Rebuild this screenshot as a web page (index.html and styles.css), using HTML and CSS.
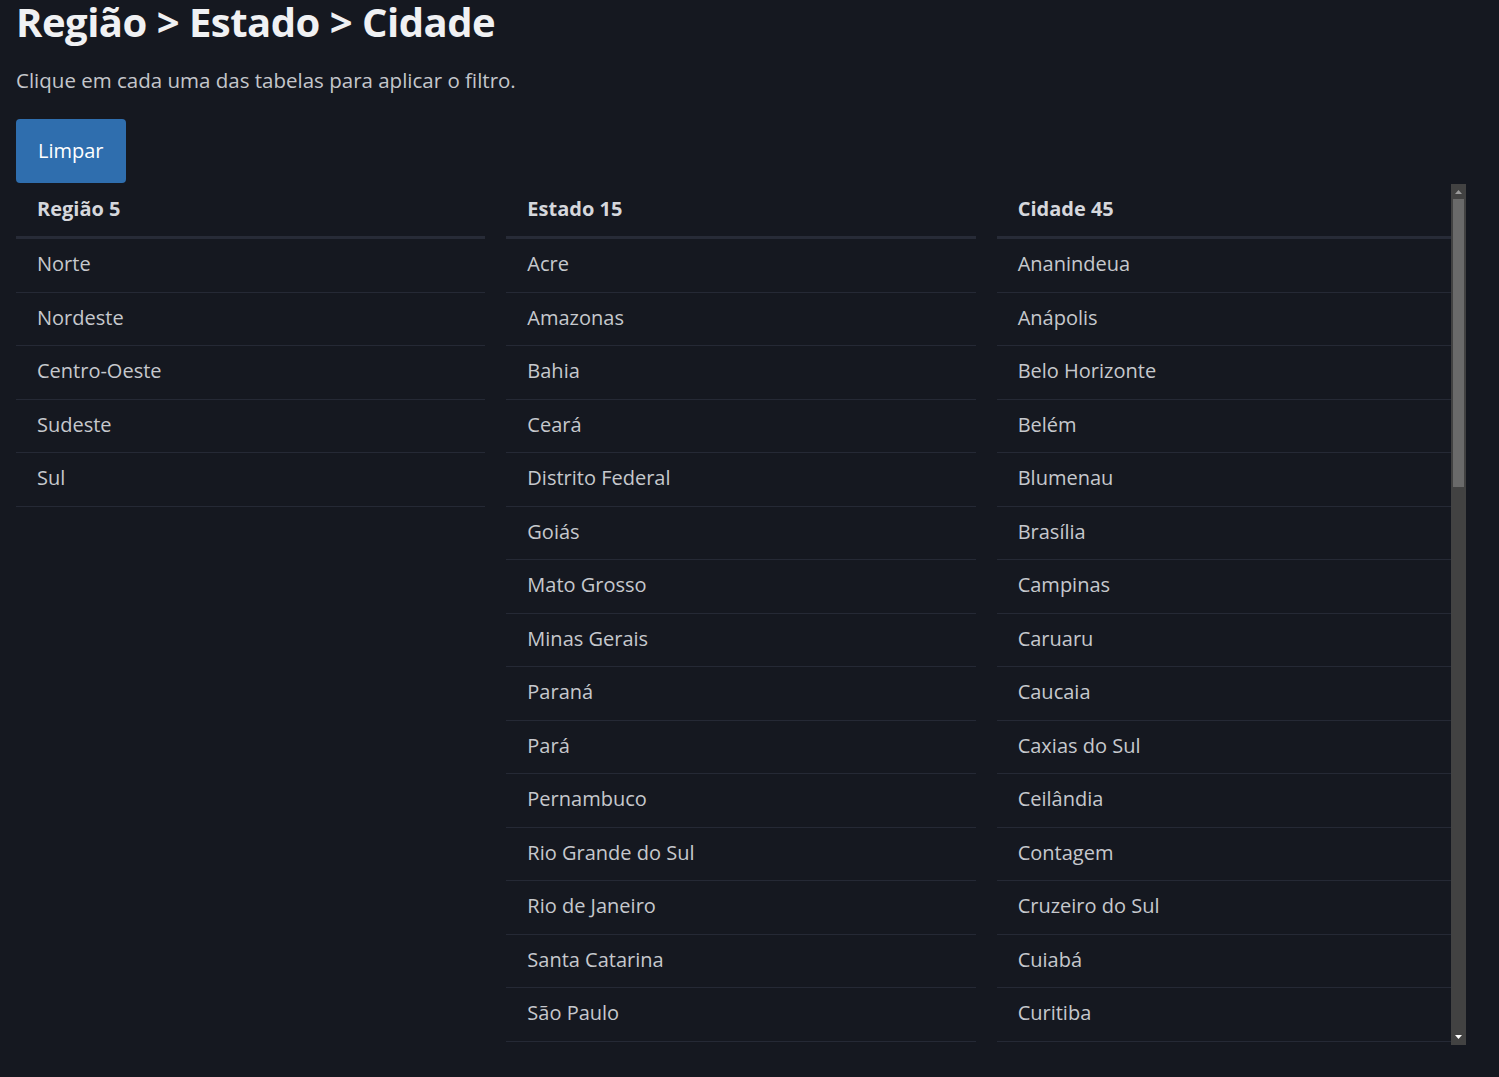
FILE: index.html
```html
<!DOCTYPE html>
<html lang="pt-BR">
<head>
<meta charset="utf-8">
<title>Região &gt; Estado &gt; Cidade</title>
<link rel="stylesheet" href="styles.css">
</head>
<body>
<main class="page">
  <h1 class="title">Região &gt; Estado &gt; Cidade</h1>
  <p class="subtitle">Clique em cada uma das tabelas para aplicar o filtro.</p>
  <button class="btn" type="button">Limpar</button>
  <section class="tables">
    <div class="col">
      <table class="tbl">
        <thead><tr><th>Região 5</th></tr></thead>
        <tbody>
          <tr><td>Norte</td></tr>
          <tr><td>Nordeste</td></tr>
          <tr><td>Centro-Oeste</td></tr>
          <tr><td>Sudeste</td></tr>
          <tr><td>Sul</td></tr>
        </tbody>
      </table>
    </div>
    <div class="col">
      <table class="tbl">
        <thead><tr><th>Estado 15</th></tr></thead>
        <tbody>
          <tr><td>Acre</td></tr>
          <tr><td>Amazonas</td></tr>
          <tr><td>Bahia</td></tr>
          <tr><td>Ceará</td></tr>
          <tr><td>Distrito Federal</td></tr>
          <tr><td>Goiás</td></tr>
          <tr><td>Mato Grosso</td></tr>
          <tr><td>Minas Gerais</td></tr>
          <tr><td>Paraná</td></tr>
          <tr><td>Pará</td></tr>
          <tr><td>Pernambuco</td></tr>
          <tr><td>Rio Grande do Sul</td></tr>
          <tr><td>Rio de Janeiro</td></tr>
          <tr><td>Santa Catarina</td></tr>
          <tr><td>São Paulo</td></tr>
        </tbody>
      </table>
    </div>
    <div class="col col-scroll">
      <div class="clip">
        <table class="tbl">
          <thead><tr><th>Cidade 45</th></tr></thead>
          <tbody>
            <tr><td>Ananindeua</td></tr>
            <tr><td>Anápolis</td></tr>
            <tr><td>Belo Horizonte</td></tr>
            <tr><td>Belém</td></tr>
            <tr><td>Blumenau</td></tr>
            <tr><td>Brasília</td></tr>
            <tr><td>Campinas</td></tr>
            <tr><td>Caruaru</td></tr>
            <tr><td>Caucaia</td></tr>
            <tr><td>Caxias do Sul</td></tr>
            <tr><td>Ceilândia</td></tr>
            <tr><td>Contagem</td></tr>
            <tr><td>Cruzeiro do Sul</td></tr>
            <tr><td>Cuiabá</td></tr>
            <tr><td>Curitiba</td></tr>
          </tbody>
        </table>
      </div>
      <div class="scrollbar" aria-hidden="true">
        <div class="sb-btn">
          <svg width="15" height="15" viewBox="0 0 15 15"><polygon points="4,10 7.5,6 11,10" fill="#9a9a9a"/></svg>
        </div>
        <div class="sb-track"><div class="sb-thumb"></div></div>
        <div class="sb-btn">
          <svg width="15" height="15" viewBox="0 0 15 15"><polygon points="4,5 11,5 7.5,9" fill="#ffffff"/></svg>
        </div>
      </div>
    </div>
  </section>
</main>
</body>
</html>
```

FILE: styles.css
```css
html, body {
  margin: 0;
  padding: 0;
  background: #151820;
}

body {
  font-family: "Open Sans", "Noto Sans", "Liberation Sans", sans-serif;
  color: #c9cbd0;
}

.page {
  padding: 0 33px 0 16px;
}

.title {
  margin: 0;
  font-size: 40px;
  line-height: 44px;
  font-weight: 700;
  color: #f0f1f3;
  letter-spacing: -0.5px;
}

.subtitle {
  margin: 21px 0 0;
  font-size: 20.5px;
  line-height: 30px;
  color: #c4c6cb;
}

.btn {
  display: block;
  margin-top: 24px;
  padding: 17px 22px;
  border: 0;
  border-radius: 4px;
  background: #2f6eae;
  color: #ffffff;
  font-family: inherit;
  font-size: 20px;
  line-height: 30px;
}

.tables {
  margin-top: 1px;
  display: grid;
  grid-template-columns: repeat(3, 1fr);
  column-gap: 21px;
  align-items: start;
}

.col {
  min-width: 0;
}

.col-scroll {
  display: flex;
  height: 861px;
}

.clip {
  flex: 1;
  min-width: 0;
  overflow: hidden;
}

.scrollbar {
  width: 15px;
  flex: none;
  display: flex;
  flex-direction: column;
  background: #424242;
}

.sb-btn {
  height: 15px;
  flex: none;
}

.sb-btn svg {
  display: block;
}

.sb-track {
  flex: 1;
  padding: 0 2px;
}

.sb-thumb {
  height: 288px;
  background: #6a6a6a;
}

.tbl {
  width: 100%;
  border-collapse: collapse;
}

.tbl th {
  text-align: left;
  padding: 11px 21px 13px;
  font-size: 20px;
  line-height: 28px;
  font-weight: 700;
  color: #d5d7dc;
  border-bottom: 3px solid #272b37;
}

.tbl td {
  padding: 11px 21px 13px;
  font-size: 20px;
  line-height: 28.5px;
  color: #c6c8cd;
  border-bottom: 1px solid #252935;
}
```
